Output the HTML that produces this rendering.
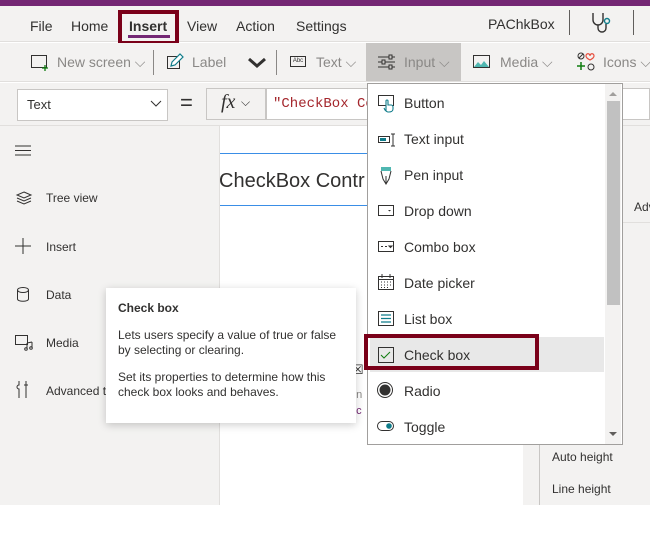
<!DOCTYPE html>
<html><head><meta charset="utf-8"><style>
*{box-sizing:border-box;margin:0;padding:0}
body{width:650px;height:535px;overflow:hidden;background:#fff;font-family:"Liberation Sans",sans-serif;color:#323130;position:relative}
.a{position:absolute}
.t{font-size:14px;color:#323130;white-space:nowrap}
.g{color:#8a8886}
svg{position:absolute;overflow:visible}
</style></head><body>
<div class="a" style="left:0;top:0;width:650px;height:6px;background:#742774"></div>
<div class="a" style="left:0;top:6px;width:650px;height:36px;background:#f3f2f1;border-bottom:1px solid #e1dfdd"></div>
<div class="a t" style="left:30px;top:18px;font-size:14px">File</div>
<div class="a t" style="left:71px;top:18px">Home</div>
<div class="a" style="left:118px;top:10px;width:61px;height:35px;border:4px solid #7a0019"></div>
<div class="a t" style="left:129px;top:18px;font-weight:bold">Insert</div>
<div class="a" style="left:128px;top:35px;width:42px;height:3px;background:#742774"></div>
<div class="a t" style="left:187px;top:18px">View</div>
<div class="a t" style="left:236px;top:18px">Action</div>
<div class="a t" style="left:296px;top:18px">Settings</div>
<div class="a t" style="left:488px;top:16px">PAChkBox</div>
<div class="a" style="left:569px;top:10px;width:1px;height:25px;background:#605e5c"></div>
<div class="a" style="left:633px;top:10px;width:1px;height:25px;background:#605e5c"></div>
<svg style="left:590px;top:12px" width="24" height="22"><path d="M3 1v7a5 5 0 0 0 10 0V1M8 13v3a4 4 0 0 0 8 0v-4" fill="none" stroke="#323130" stroke-width="1.4"/><circle cx="17" cy="9" r="2.5" fill="none" stroke="#0f7c8a" stroke-width="1.4"/></svg>
<!-- toolbar -->
<div class="a" style="left:0;top:43px;width:650px;height:39px;background:#f3f2f1;border-bottom:1px solid #e1dfdd"></div>
<svg style="left:31px;top:55px" width="18" height="16"><rect x=".5" y=".5" width="15" height="12" fill="none" stroke="#323130"/><path d="M14 10v6M11 13h6" stroke="#107c10" stroke-width="1.3"/></svg>
<div class="a t g" style="left:57px;top:54px">New screen ⌵</div>
<div class="a" style="left:153px;top:50px;width:1px;height:25px;background:#8a8886"></div>
<svg style="left:167px;top:54px" width="16" height="16"><rect x=".5" y="2.5" width="12" height="12" fill="none" stroke="#323130"/><path d="M4 12l1-4 8-8 3 3-8 8z" fill="#fff" stroke="#0f7c8a" stroke-width="1.2"/></svg>
<div class="a t g" style="left:192px;top:54px">Label</div>
<svg style="left:248px;top:57px" width="18" height="12"><path d="M1 2l8 7 8-7" fill="none" stroke="#323130" stroke-width="3"/></svg>
<div class="a" style="left:276px;top:50px;width:1px;height:25px;background:#8a8886"></div>
<div class="a" style="left:290px;top:56px;width:16px;height:11px;border:1px solid #323130;font-size:6px;line-height:9px;text-align:center">Abc</div>
<div class="a t g" style="left:316px;top:54px">Text ⌵</div>
<div class="a" style="left:366px;top:43px;width:95px;height:38px;background:#c8c6c4"></div>
<svg style="left:378px;top:54px" width="18" height="16"><path d="M0 3h17M0 8h17M0 13h17" stroke="#323130"/><rect x="11" y="1" width="3" height="4" fill="#c8c6c4" stroke="#323130"/><rect x="4" y="6" width="3" height="4" fill="#c8c6c4" stroke="#323130"/><rect x="11" y="11" width="3" height="4" fill="#c8c6c4" stroke="#323130"/></svg>
<div class="a t g" style="left:404px;top:54px">Input ⌵</div>
<svg style="left:473px;top:55px" width="18" height="14"><rect x=".5" y=".5" width="16" height="12" fill="none" stroke="#323130"/><path d="M1 12l4-5 3 3 3-4 5 6z" fill="#4fb7b1"/></svg>
<div class="a t g" style="left:500px;top:54px">Media ⌵</div>
<svg style="left:577px;top:52px" width="20" height="20"><circle cx="4" cy="4" r="3" fill="none" stroke="#323130"/><path d="M2 6l4-4" stroke="#323130"/><path d="M13 4c0-3 4-3 4 0 0 2-4 4-4 4s-4-2-4-4c0-3 4-3 4 0" fill="none" stroke="#e74c3c" stroke-width="1.2"/><path d="M4 10v8M0 14h8" stroke="#107c10" stroke-width="1.5"/><circle cx="14" cy="15" r="3" fill="none" stroke="#323130"/></svg>
<div class="a t g" style="left:603px;top:54px">Icons ⌵</div>
<!-- formula bar -->
<div class="a" style="left:0;top:83px;width:650px;height:43px;background:#f3f2f1;border-bottom:1px solid #e1dfdd"></div>
<div class="a" style="left:17px;top:89px;width:151px;height:32px;background:#fff;border:1px solid #c8c6c4"></div>
<div class="a t" style="left:27px;top:97px;font-size:13px">Text</div>
<svg style="left:150px;top:100px" width="12" height="8"><path d="M1 1l5 5 5-5" fill="none" stroke="#323130"/></svg>
<div class="a" style="left:180px;top:90px;font-size:22px;color:#323130">=</div>
<div class="a" style="left:206px;top:88px;width:60px;height:32px;background:#f3f2f1;border:1px solid #c8c6c4"></div>
<div class="a" style="left:221px;top:91px;font-family:'Liberation Serif',serif;font-style:italic;font-size:20px">fx</div>
<div class="a t" style="left:241px;top:95px;font-size:12px">⌵</div>
<div class="a" style="left:266px;top:88px;width:384px;height:32px;background:#fff;border:1px solid #c8c6c4"></div>
<div class="a" style="left:273px;top:96px;font-family:'Liberation Mono',monospace;font-size:14px;color:#a4262c">"CheckBox Co</div>
<!-- left panel -->
<div class="a" style="left:0;top:126px;width:220px;height:379px;background:#f3f2f1;border-right:1px solid #e1dfdd"></div>
<svg style="left:15px;top:145px" width="18" height="12"><path d="M0 1h16M0 5.5h16M0 10h16" stroke="#323130"/></svg>
<svg style="left:16px;top:191px" width="16" height="14"><path d="M8 1l7 3-7 3-7-3z M1 7l7 3 7-3 M1 10l7 3 7-3" fill="none" stroke="#323130"/></svg>
<div class="a t" style="left:46px;top:191px;font-size:12px">Tree view</div>
<svg style="left:15px;top:238px" width="16" height="16"><path d="M8 0v16M0 8h16" stroke="#323130"/></svg>
<div class="a t" style="left:46px;top:240px;font-size:12px">Insert</div>
<svg style="left:17px;top:287px" width="12" height="15"><path d="M.5 3v9c0 3 11 3 11 0V3" fill="none" stroke="#323130"/><ellipse cx="6" cy="3" rx="5.5" ry="2.5" fill="none" stroke="#323130"/></svg>
<div class="a t" style="left:46px;top:288px;font-size:12px">Data</div>
<svg style="left:15px;top:335px" width="18" height="16"><rect x=".5" y=".5" width="12" height="9" fill="none" stroke="#323130"/><path d="M12 8v6M17 7v6M12 8l5-1" fill="none" stroke="#323130"/><circle cx="11" cy="14" r="1.3" fill="none" stroke="#323130"/><circle cx="16" cy="13" r="1.3" fill="none" stroke="#323130"/></svg>
<div class="a t" style="left:46px;top:336px;font-size:12px">Media</div>
<svg style="left:17px;top:381px" width="12" height="18"><path d="M2 0v4a2 2 0 0 0 0 4v9M9 0v17M7 4h4" fill="none" stroke="#323130"/></svg>
<div class="a t" style="left:46px;top:384px;font-size:12px">Advanced t</div>
<!-- canvas -->
<div class="a" style="left:220px;top:153px;width:147px;height:1px;background:#3a8ee6"></div>
<div class="a" style="left:220px;top:205px;width:147px;height:1px;background:#3a8ee6"></div>
<div class="a" style="left:219px;top:170px;font-size:20px;color:#323130;white-space:nowrap">CheckBox Contr</div>
<div class="a t" style="left:352px;top:362px;font-size:13px">☒</div>
<div class="a t" style="left:350px;top:389px;font-size:11px;color:#8a8886">nn</div>
<div class="a t" style="left:350px;top:405px;font-size:11px;color:#742774">ec</div>
<!-- right panel -->
<div class="a" style="left:622px;top:126px;width:28px;height:379px;background:#f3f2f1"></div>
<div class="a" style="left:622px;top:222px;width:28px;height:1px;background:#e1dfdd"></div>
<div class="a t" style="left:634px;top:200px;font-size:12px">Adv</div>
<div class="a" style="left:523px;top:444px;width:127px;height:61px;background:#f3f2f1"></div>
<div class="a" style="left:539px;top:444px;width:1px;height:61px;background:#c8c6c4"></div>
<div class="a t" style="left:552px;top:450px;font-size:12px">Auto height</div>
<div class="a t" style="left:552px;top:482px;font-size:12px">Line height</div>
<div class="a t" style="left:612px;top:418px;font-size:12px">nt</div>
<!-- tooltip -->
<div class="a" style="left:106px;top:288px;width:250px;height:135px;background:#fff;box-shadow:0 2px 8px rgba(0,0,0,.2)"></div>
<div class="a t" style="left:118px;top:301px;font-size:12px;font-weight:bold">Check box</div>
<div class="a" style="left:118px;top:328px;width:230px;font-size:12px;line-height:15px;color:#323130">Lets users specify a value of true or false by selecting or clearing.</div>
<div class="a" style="left:118px;top:370px;width:230px;font-size:12px;line-height:15px;color:#323130">Set its properties to determine how this check box looks and behaves.</div>
<!-- dropdown -->
<div class="a" style="left:367px;top:83px;width:256px;height:362px;background:#fff;border:1px solid #a19f9d"></div>
<div class="a" style="left:605px;top:84px;width:16px;height:360px;background:#f3f2f1"></div>
<div class="a" style="left:607px;top:101px;width:13px;height:204px;background:#c1c1c1"></div>
<svg style="left:609px;top:91px" width="8" height="5"><path d="M0 5l4-4 4 4z" fill="#a19f9d"/></svg>
<svg style="left:609px;top:432px" width="8" height="5"><path d="M0 0l4 4 4-4z" fill="#605e5c"/></svg>
<div class="a" style="left:370px;top:337px;width:234px;height:35px;background:#e8e8e8"></div>
<div class="a" style="left:364px;top:334px;width:175px;height:36px;border:4px solid #7a0019"></div>
<div class="a t" style="left:404px;top:95px">Button</div>
<div class="a t" style="left:404px;top:131px">Text input</div>
<div class="a t" style="left:404px;top:167px">Pen input</div>
<div class="a t" style="left:404px;top:203px">Drop down</div>
<div class="a t" style="left:404px;top:239px">Combo box</div>
<div class="a t" style="left:404px;top:275px">Date picker</div>
<div class="a t" style="left:404px;top:311px">List box</div>
<div class="a t" style="left:404px;top:347px">Check box</div>
<div class="a t" style="left:404px;top:383px">Radio</div>
<div class="a t" style="left:404px;top:419px">Toggle</div>
<svg style="left:378px;top:95px" width="18" height="18"><rect x=".5" y=".5" width="15" height="10" fill="none" stroke="#323130"/><path d="M8 16V6a1 1 0 0 1 2 0v4h3a2 2 0 0 1 2 2v2c0 2-2 3-4 3h-1c-1 0-2-1-3-2l-1-2" fill="#fff" stroke="#0f7c8a" stroke-width="1.1"/></svg>
<svg style="left:378px;top:133px" width="18" height="14"><rect x=".5" y="3.5" width="11" height="6" fill="none" stroke="#323130"/><rect x="2" y="5" width="6" height="3" fill="#0f7c8a"/><path d="M13 1h4M15 1v12M13 13h4" stroke="#323130"/></svg>
<svg style="left:380px;top:167px" width="12" height="18"><rect x="1" y="0" width="10" height="4" fill="#4fb7b1"/><path d="M1 4l2 8 3 5 3-5 2-8M6 9v8" fill="none" stroke="#323130"/></svg>
<svg style="left:378px;top:205px" width="17" height="12"><rect x=".5" y=".5" width="15" height="10" fill="none" stroke="#323130"/><path d="M10 5h3l-1.5 1.5z" fill="#323130"/></svg>
<svg style="left:378px;top:241px" width="17" height="12"><rect x=".5" y=".5" width="15" height="10" fill="none" stroke="#323130"/><path d="M3 5.5h2M7 5.5h2M11 5h3l-1.5 1.5z" stroke="#323130" fill="#323130"/></svg>
<svg style="left:378px;top:274px" width="17" height="17"><rect x=".5" y="2.5" width="15" height="13" fill="none" stroke="#323130"/><path d="M.5 5.5h15M4 0v4M12 0v4" stroke="#323130"/><path d="M3 8h1M6 8h1M9 8h1M12 8h1M3 11h1M6 11h1M9 11h1M12 11h1M3 13.5h1M6 13.5h1M9 13.5h1" stroke="#323130"/></svg>
<svg style="left:378px;top:311px" width="16" height="16"><rect x=".5" y=".5" width="15" height="14" fill="none" stroke="#323130"/><path d="M3 4h10M3 7.5h10M3 11h10" stroke="#0f7c8a" stroke-width="1.2"/></svg>
<svg style="left:378px;top:347px" width="16" height="16"><rect x=".5" y=".5" width="15" height="15" fill="none" stroke="#323130"/><path d="M3 8l3 3 6-6" fill="none" stroke="#107c10"/></svg>
<svg style="left:377px;top:382px" width="18" height="18"><circle cx="8" cy="8" r="7.5" fill="none" stroke="#323130"/><circle cx="8" cy="8" r="5.5" fill="#323130"/></svg>
<svg style="left:377px;top:421px" width="18" height="12"><rect x=".5" y=".5" width="16" height="9" rx="4.5" fill="none" stroke="#323130"/><circle cx="12" cy="5" r="2.8" fill="#0f7c8a"/></svg>
</body></html>
